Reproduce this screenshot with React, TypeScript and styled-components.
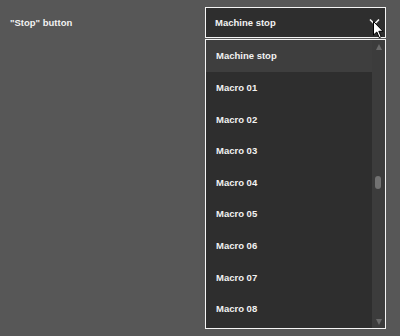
import React from "react";
import styled, { createGlobalStyle } from "styled-components";

const GlobalStyle = createGlobalStyle`
  html, body {
    margin: 0;
    padding: 0;
    background: #575757;
    font-family: "Liberation Sans", Arial, sans-serif;
  }
`;

const options = [
  "Machine stop",
  "Macro 01",
  "Macro 02",
  "Macro 03",
  "Macro 04",
  "Macro 05",
  "Macro 06",
  "Macro 07",
  "Macro 08",
];

const Page = styled.div`
  width: 400px;
  height: 336px;
  padding-top: 7px;
  box-sizing: border-box;
`;

const Row = styled.div`
  display: grid;
  grid-template-columns: 205px 181px;
  align-items: start;
`;

const Label = styled.div`
  height: 31px;
  padding-left: 10px;
  display: flex;
  align-items: center;
  color: #f2f2f2;
  font-size: 9.5px;
  font-weight: bold;
`;

const SelectWrap = styled.div`
  position: relative;
`;

const SelectBox = styled.div`
  height: 31px;
  box-sizing: border-box;
  border: 1px solid #f4f4f4;
  background: #2e2e2e;
  display: flex;
  align-items: center;
  justify-content: space-between;
  padding: 0 5px 0 9px;
  color: #f2f2f2;
  font-size: 9.5px;
  font-weight: bold;
`;

const Chevron = styled.svg`
  width: 11px;
  height: 8px;
  margin-top: -1px;
`;

const Cursor = styled.svg`
  position: absolute;
  left: 168px;
  top: 14px;
  width: 11px;
  height: 18px;
`;

const Menu = styled.div`
  position: absolute;
  top: 32px;
  left: 0;
  width: 181px;
  height: 290px;
  box-sizing: border-box;
  border: 1px solid #f4f4f4;
  background: #2e2e2e;
  display: flex;
`;

const List = styled.div`
  flex: 1;
  display: flex;
  flex-direction: column;
`;

const Item = styled.div<{ $active?: boolean }>`
  height: 31.625px;
  flex: none;
  display: flex;
  align-items: center;
  padding-left: 10px;
  background: ${(p) => (p.$active ? "#3e3e3e" : "transparent")};
  color: #f2f2f2;
  font-size: 9.5px;
  font-weight: bold;
`;

const Scrollbar = styled.div`
  width: 13px;
  background: #3c3c3c;
  display: flex;
  flex-direction: column;
  align-items: center;
  justify-content: space-between;
  padding: 4px 0 3px;
  box-sizing: border-box;
  position: relative;
`;

const Arrow = styled.div<{ $down?: boolean }>`
  width: 0;
  height: 0;
  border-left: 3.5px solid transparent;
  border-right: 3.5px solid transparent;
  ${(p) =>
    p.$down
      ? "border-top: 6px solid #6a6a6a;"
      : "border-bottom: 6px solid #6a6a6a;"}
`;

const Thumb = styled.div`
  position: absolute;
  left: 3px;
  top: 136px;
  width: 6px;
  height: 13px;
  border-radius: 3px;
  background: #727272;
`;

export default function App() {
  return (
    <Page>
      <GlobalStyle />
      <Row>
        <Label>"Stop" button</Label>
        <SelectWrap>
          <SelectBox>
            <span>Machine stop</span>
            <Chevron viewBox="0 0 11 8">
              <path d="M1 1.5 L5.5 6 L10 1.5" fill="none" stroke="#f2f2f2" strokeWidth="1.6" />
            </Chevron>
          </SelectBox>
          <Menu>
            <List>
              {options.map((o, i) => (
                <Item key={o} $active={i === 0}>
                  {o}
                </Item>
              ))}
            </List>
            <Scrollbar>
              <Arrow />
              <Thumb />
              <Arrow $down />
            </Scrollbar>
          </Menu>
          <Cursor viewBox="0 0 11 18">
            <path
              d="M0.5 0.5 L0.5 14 L3.8 11 L6.2 16.6 L8.2 15.7 L5.8 10.3 L10 10.3 Z"
              fill="#ffffff"
              stroke="#000000"
              strokeWidth="1"
              strokeLinejoin="miter"
            />
          </Cursor>
        </SelectWrap>
      </Row>
    </Page>
  );
}
